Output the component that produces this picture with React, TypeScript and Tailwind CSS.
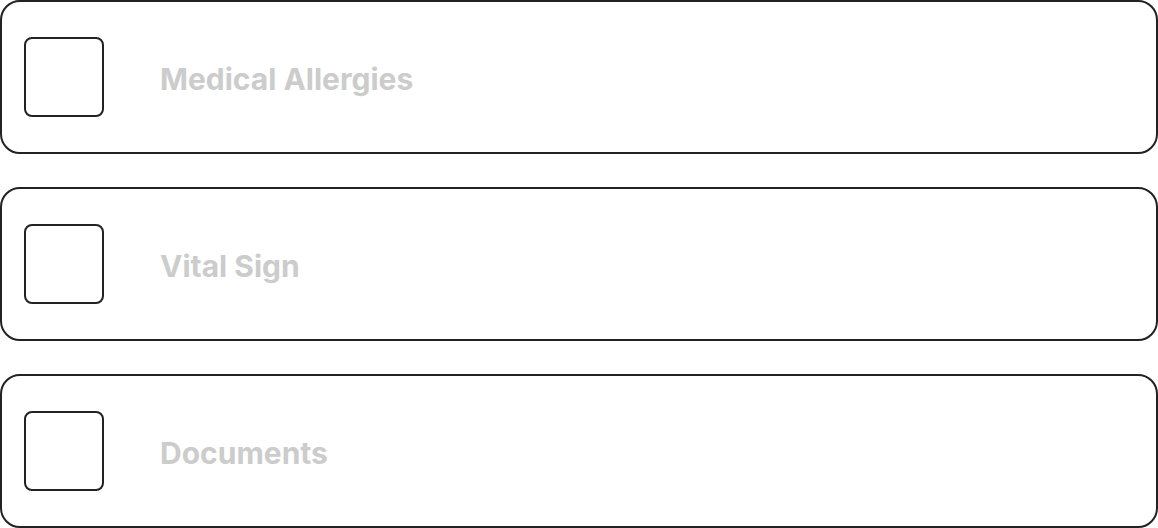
import React from 'react';

const items = ['Medical Allergies', 'Vital Sign', 'Documents'];

export default function App() {
    return (
        <div className="w-[1158px] h-[528px] bg-white flex flex-col gap-[33px]" style={{ fontFamily: 'Inter, "Noto Sans", sans-serif' }}>
            {items.map((label) => (
                <div
                    key={label}
                    className="h-[154px] flex items-center rounded-[20px] border-2 border-[#222222] pl-[22px]"
                >
                    <div className="w-[80px] h-[80px] rounded-[8px] border-2 border-[#222222] shrink-0" />
                    <span className="ml-[56px] mt-[3px] text-[30px] font-bold text-[#cccccc] leading-none">{label}</span>
                </div>
            ))}
        </div>
    );
}
